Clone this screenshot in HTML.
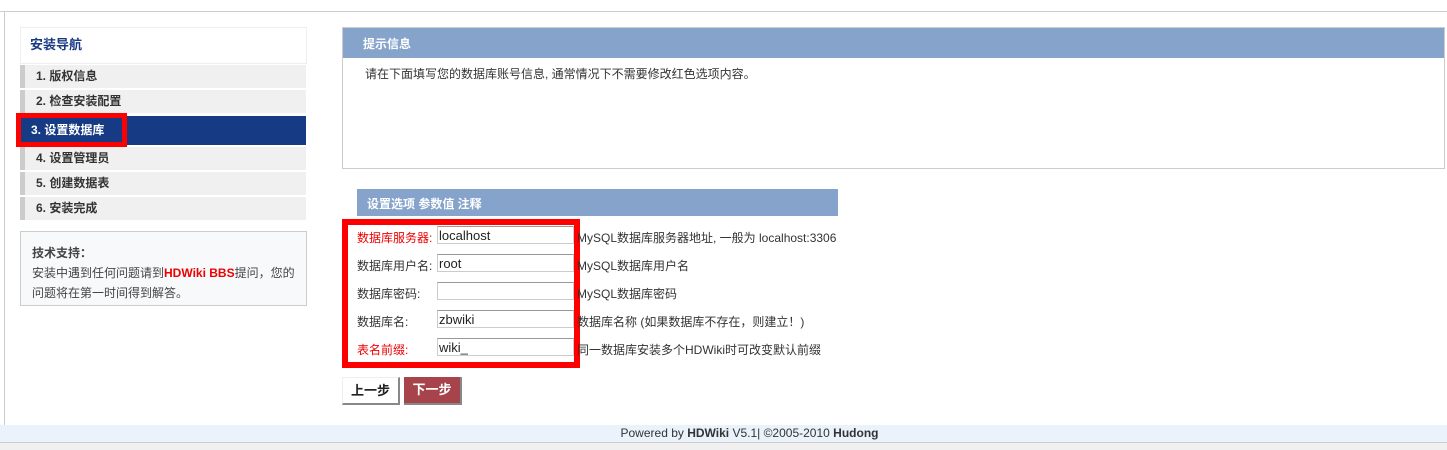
<!DOCTYPE html>
<html><head><meta charset="utf-8"><style>
*{margin:0;padding:0;box-sizing:border-box}
body{width:1447px;height:450px;background:#fff;font-family:"Liberation Sans","Noto Sans CJK SC",sans-serif;font-size:12px;color:#333;position:relative;overflow:hidden}
.a{position:absolute}
.nav div.i{position:absolute;left:20px;width:286px;height:23px;background:#f0f0f0;border-left:5px solid #ccc;font-weight:bold;padding-left:11px;line-height:23px;color:#333}
.lbl{position:absolute;left:357px;color:#333}
.red{color:#e00}
.inp{position:absolute;left:437px;width:137px;height:18px;border:1px solid #ccc;border-top-color:#999;padding-left:1px;line-height:18px;font-size:13px;color:#222}
.cm{position:absolute;left:577px;color:#333}
</style></head><body>
<div class="a" style="left:0;top:11px;width:1447px;height:1px;background:#ccc"></div>
<div class="a" style="left:4px;top:11px;width:1px;height:414px;background:#ccc"></div>

<div class="a" style="left:20px;top:27px;width:287px;height:37px;border:1px solid #eee;color:#1a3a84;font-weight:bold;font-size:13px;padding:6px 0 0 9px">安装导航</div>
<div class="nav">
<div class="i" style="top:65px">1. 版权信息</div>
<div class="i" style="top:90px">2. 检查安装配置</div>
<div class="a" style="left:20px;top:116px;width:286px;height:29px;background:#163a84"></div>
<div class="a" style="left:16px;top:113px;width:111px;height:34px;border:5px solid #f00"></div>
<div class="a" style="left:31px;top:121px;color:#fff;font-weight:bold">3. 设置数据库</div>
<div class="i" style="top:147px">4. 设置管理员</div>
<div class="i" style="top:172px">5. 创建数据表</div>
<div class="i" style="top:197px">6. 安装完成</div>
</div>
<div class="a" style="left:20px;top:231px;width:287px;height:75px;background:#f8f9fb;border:1px solid #ccc;padding:11px 0 0 11px;line-height:20px;color:#444"><b style="font-weight:bold">技术支持：</b><br>安装中遇到任何问题请到<b style="color:#e00">HDWiki BBS</b>提问，您的<br>问题将在第一时间得到解答。</div>

<div class="a" style="left:342px;top:27px;width:1103px;height:142px;border:1px solid #ccc"></div>
<div class="a" style="left:343px;top:28px;width:1101px;height:30px;background:#86a3cc;color:#fff;font-weight:bold;padding:7px 0 0 20px">提示信息</div>
<div class="a" style="left:365px;top:65px;color:#333">请在下面填写您的数据库账号信息, 通常情况下不需要修改红色选项内容。</div>

<div class="a" style="left:357px;top:189px;width:481px;height:27px;background:#86a3cc;color:#fff;font-weight:bold;padding:6px 0 0 10px">设置选项 参数值 注释</div>
<div class="a" style="left:342px;top:219px;width:238px;height:149px;border:6px solid #f00"></div>

<div class="lbl red" style="top:229px">数据库服务器:</div><div class="inp" style="top:226px">localhost</div><div class="cm" style="top:229px">MySQL数据库服务器地址, 一般为 localhost:3306</div>
<div class="lbl" style="top:257px">数据库用户名:</div><div class="inp" style="top:254px">root</div><div class="cm" style="top:257px">MySQL数据库用户名</div>
<div class="lbl" style="top:285px">数据库密码:</div><div class="inp" style="top:282px"></div><div class="cm" style="top:285px">MySQL数据库密码</div>
<div class="lbl" style="top:313px">数据库名:</div><div class="inp" style="top:310px">zbwiki</div><div class="cm" style="top:313px">数据库名称 (如果数据库不存在，则建立！)</div>
<div class="lbl red" style="top:341px">表名前缀:</div><div class="inp" style="top:338px">wiki_</div><div class="cm" style="top:341px">同一数据库安装多个HDWiki时可改变默认前缀</div>

<div class="a" style="left:342px;top:377px;width:58px;height:28px;background:#fff;border:1px solid #eee;border-right:2px solid #888;border-bottom:2px solid #888;font-weight:bold;font-size:13px;text-align:center;line-height:26px;color:#222">上一步</div>
<div class="a" style="left:404px;top:377px;width:58px;height:28px;background:#a6434b;border-right:2px solid #888;border-bottom:2px solid #888;font-weight:bold;font-size:13px;text-align:center;line-height:26px;color:#fff">下一步</div>

<div class="a" style="left:0;top:425px;width:1447px;height:17px;background:#eaf2fb;text-align:center;line-height:17px;color:#333;padding-left:52px">Powered by <b>HDWiki</b> V5.1| ©2005-2010 <b>Hudong</b></div>
<div class="a" style="left:0;top:442px;width:1447px;height:1px;background:#ccc"></div>
<div class="a" style="left:0;top:443px;width:1447px;height:7px;background:#f0f0f0"></div>
</body></html>
